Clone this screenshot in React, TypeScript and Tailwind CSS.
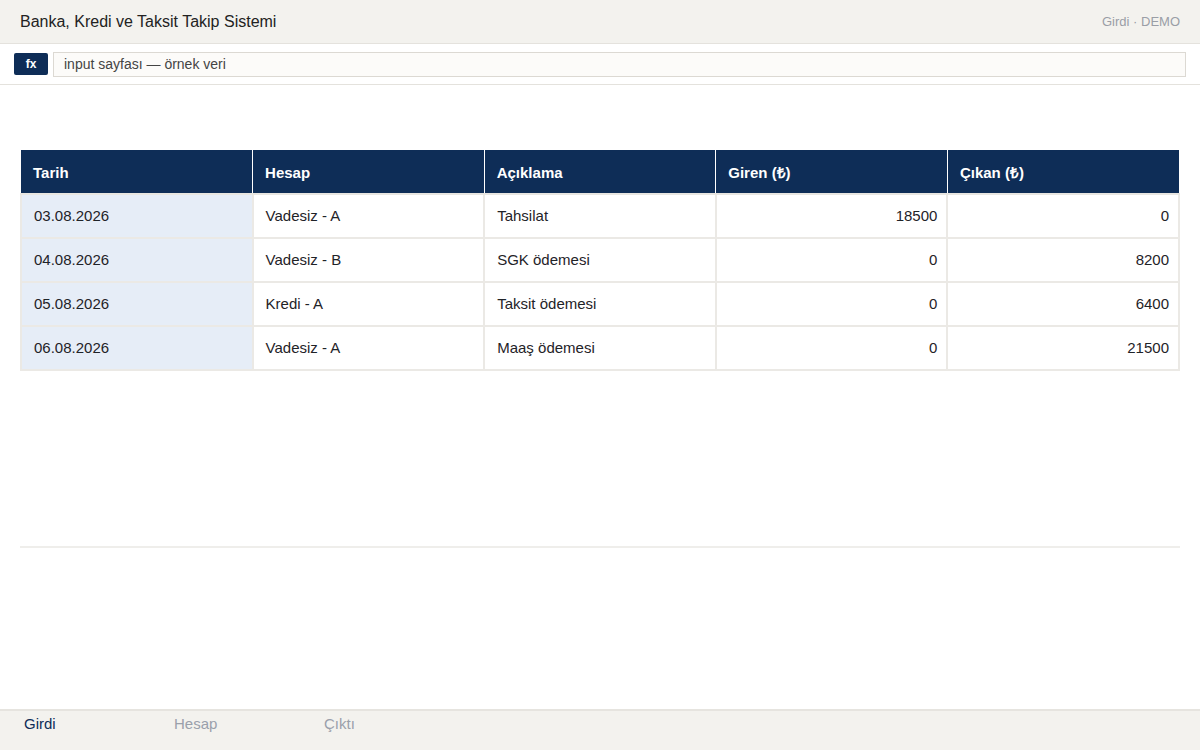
const rows = [
  { tarih: "03.08.2026", hesap: "Vadesiz - A", aciklama: "Tahsilat", giren: "18500", cikan: "0" },
  { tarih: "04.08.2026", hesap: "Vadesiz - B", aciklama: "SGK ödemesi", giren: "0", cikan: "8200" },
  { tarih: "05.08.2026", hesap: "Kredi - A", aciklama: "Taksit ödemesi", giren: "0", cikan: "6400" },
  { tarih: "06.08.2026", hesap: "Vadesiz - A", aciklama: "Maaş ödemesi", giren: "0", cikan: "21500" },
];

const headers = ["Tarih", "Hesap", "Açıklama", "Giren (₺)", "Çıkan (₺)"];

export default function App() {
  return (
    <div className="flex h-[750px] w-[1200px] flex-col bg-white font-['Liberation_Sans',Arial,sans-serif] text-[#1f2328]">
      <header className="flex h-[44px] shrink-0 items-center justify-between border-b border-[#e4e2dd] bg-[#f3f2ee] px-5">
        <h1 className="text-[16px] text-[#222]">Banka, Kredi ve Taksit Takip Sistemi</h1>
        <span className="text-[13px] text-[#9a9ea6]">Girdi · DEMO</span>
      </header>

      <div className="flex h-[41px] shrink-0 items-center gap-[5px] border-b border-[#e4e2dd] px-[14px]">
        <span className="flex h-[22px] w-[34px] items-center justify-center rounded-[2px] bg-[#0e2d57] text-[12px] font-bold text-white">
          fx
        </span>
        <div className="flex h-[25px] flex-1 items-center border border-[#dcd9d3] bg-[#fcfbf9] px-[10px] text-[14px] text-[#444]">
          input sayfası — örnek veri
        </div>
      </div>

      <main className="flex-1 px-5 pt-[65px]">
        <table className="w-full table-fixed border-collapse text-[15px]">
          <thead>
            <tr className="h-[44px] bg-[#0e2d57] text-white">
              {headers.map((h) => (
                <th
                  key={h}
                  className="border-x border-b-2 border-x-white border-b-[#e8e6e1] px-3 pt-[3px] text-left font-bold first:border-l-0 last:border-r-0"
                >
                  {h}
                </th>
              ))}
            </tr>
          </thead>
          <tbody>
            {rows.map((r) => (
              <tr key={r.tarih} className="h-[44px]">
                <td className="border-2 border-[#ebe9e5] bg-[#e6edf7] px-3">{r.tarih}</td>
                <td className="border-2 border-[#ebe9e5] px-3">{r.hesap}</td>
                <td className="border-2 border-[#ebe9e5] px-3">{r.aciklama}</td>
                <td className="border-2 border-[#ebe9e5] px-[9px] text-right">{r.giren}</td>
                <td className="border-2 border-[#ebe9e5] px-[9px] text-right">{r.cikan}</td>
              </tr>
            ))}
          </tbody>
        </table>
        <div className="mt-[175px] border-t-2 border-[#efeeeb]" />
      </main>

      <nav className="flex h-[41px] shrink-0 border-t-2 border-[#e6e4df] bg-[#f3f2ee] px-6 pt-[2px] text-[15px]">
        <span className="w-[150px] text-[#0e2d57]">Girdi</span>
        <span className="w-[150px] text-[#9aa0ab]">Hesap</span>
        <span className="w-[150px] text-[#9aa0ab]">Çıktı</span>
      </nav>
    </div>
  );
}
